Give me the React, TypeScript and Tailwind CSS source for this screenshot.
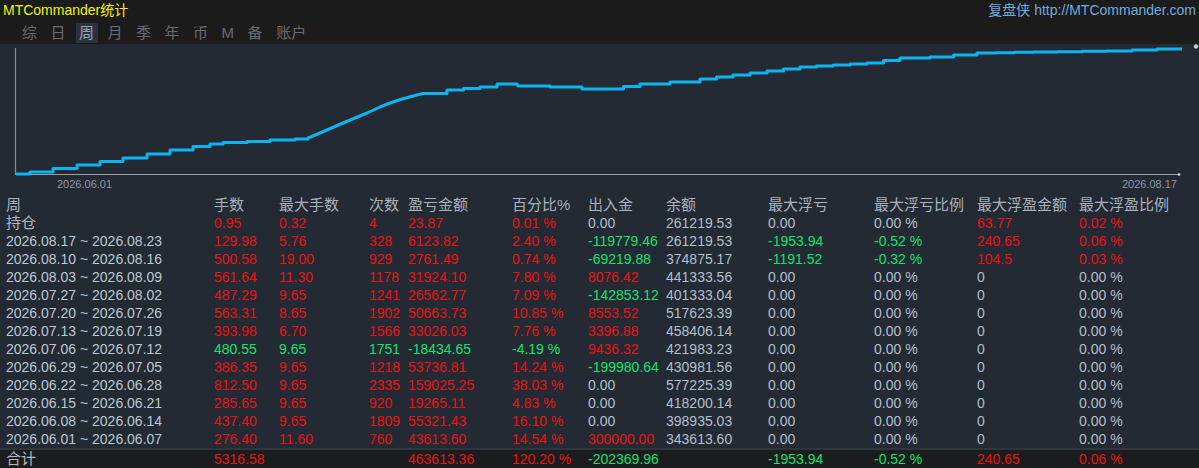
import React from "react";

// ========================================
// DATA
// ========================================

type Tone = "r" | "g" | "n";
type Cell = [string, Tone] | null;

const FONT = { fontFamily: '"Liberation Sans", "Noto Sans CJK SC", Arial, sans-serif' };

const TABS = ["综", "日", "周", "月", "季", "年", "币", "M", "备", "账户"];

const HEADERS = [
  "周",
  "手数",
  "最大手数",
  "次数",
  "盈亏金额",
  "百分比%",
  "出入金",
  "余额",
  "最大浮亏",
  "最大浮亏比例",
  "最大浮盈金额",
  "最大浮盈比例",
];

const zeroTail: Cell[] = [
  ["0.00", "n"],
  ["0.00 %", "n"],
  ["0", "n"],
  ["0.00 %", "n"],
];

const r = (v: string): Cell => [v, "r"];
const g = (v: string): Cell => [v, "g"];
const n = (v: string): Cell => [v, "n"];

const ROWS: { label: string; cells: Cell[] }[] = [
  {
    label: "持仓",
    cells: [r("0.95"), r("0.32"), r("4"), r("23.87"), r("0.01 %"), n("0.00"), n("261219.53"), n("0.00"), n("0.00 %"), r("63.77"), r("0.02 %")],
  },
  {
    label: "2026.08.17 ~ 2026.08.23",
    cells: [r("129.98"), r("5.76"), r("328"), r("6123.82"), r("2.40 %"), g("-119779.46"), n("261219.53"), g("-1953.94"), g("-0.52 %"), r("240.65"), r("0.06 %")],
  },
  {
    label: "2026.08.10 ~ 2026.08.16",
    cells: [r("500.58"), r("19.00"), r("929"), r("2761.49"), r("0.74 %"), g("-69219.88"), n("374875.17"), g("-1191.52"), g("-0.32 %"), r("104.5"), r("0.03 %")],
  },
  {
    label: "2026.08.03 ~ 2026.08.09",
    cells: [r("561.64"), r("11.30"), r("1178"), r("31924.10"), r("7.80 %"), r("8076.42"), n("441333.56"), ...zeroTail],
  },
  {
    label: "2026.07.27 ~ 2026.08.02",
    cells: [r("487.29"), r("9.65"), r("1241"), r("26562.77"), r("7.09 %"), g("-142853.12"), n("401333.04"), ...zeroTail],
  },
  {
    label: "2026.07.20 ~ 2026.07.26",
    cells: [r("563.31"), r("8.65"), r("1902"), r("50663.73"), r("10.85 %"), r("8553.52"), n("517623.39"), ...zeroTail],
  },
  {
    label: "2026.07.13 ~ 2026.07.19",
    cells: [r("393.98"), r("6.70"), r("1566"), r("33026.03"), r("7.76 %"), r("3396.88"), n("458406.14"), ...zeroTail],
  },
  {
    label: "2026.07.06 ~ 2026.07.12",
    cells: [g("480.55"), g("9.65"), g("1751"), g("-18434.65"), g("-4.19 %"), r("9436.32"), n("421983.23"), ...zeroTail],
  },
  {
    label: "2026.06.29 ~ 2026.07.05",
    cells: [r("386.35"), r("9.65"), r("1218"), r("53736.81"), r("14.24 %"), g("-199980.64"), n("430981.56"), ...zeroTail],
  },
  {
    label: "2026.06.22 ~ 2026.06.28",
    cells: [r("812.50"), r("9.65"), r("2335"), r("159025.25"), r("38.03 %"), n("0.00"), n("577225.39"), ...zeroTail],
  },
  {
    label: "2026.06.15 ~ 2026.06.21",
    cells: [r("285.65"), r("9.65"), r("920"), r("19265.11"), r("4.83 %"), n("0.00"), n("418200.14"), ...zeroTail],
  },
  {
    label: "2026.06.08 ~ 2026.06.14",
    cells: [r("437.40"), r("9.65"), r("1809"), r("55321.43"), r("16.10 %"), n("0.00"), n("398935.03"), ...zeroTail],
  },
  {
    label: "2026.06.01 ~ 2026.06.07",
    cells: [r("276.40"), r("11.60"), r("760"), r("43613.60"), r("14.54 %"), r("300000.00"), n("343613.60"), ...zeroTail],
  },
];

const TOTAL: Cell[] = [r("5316.58"), null, null, r("463613.36"), r("120.20 %"), g("-202369.96"), null, g("-1953.94"), g("-0.52 %"), r("240.65"), r("0.06 %")];

// key points of the equity curve (page coords)
const CURVE: [number, number][] = [
  [16, 174], [30, 172], [53, 168.5], [77, 165], [100, 161.5], [123, 158], [147, 154], [170, 150],
  [193, 146.5], [210, 144], [223, 142.5], [247, 141.5], [270, 140], [295, 139], [308, 138],
  [320, 133], [343, 123], [367, 113], [380, 107], [390, 103], [402, 99], [413, 96], [423, 93.5],
  [447, 90], [480, 87], [497, 84], [517, 84], [518, 86], [550, 86], [550, 87], [582, 87],
  [582, 89], [607, 89], [640, 84], [670, 82], [700, 79], [733, 75], [767, 71], [800, 67],
  [833, 65], [867, 63], [900, 58], [930, 57], [977, 53], [1033, 52], [1107, 51], [1157, 49],
  [1182, 49],
];

function stairPath(pts: [number, number][], top: number) {
  let d = `M${pts[0][0]} ${pts[0][1] - top}`;
  let py = pts[0][1];
  for (let i = 1; i < pts.length; i++) {
    const [x0, y0] = pts[i - 1];
    const [x1, y1] = pts[i];
    const dx = x1 - x0;
    const dy = y1 - y0;
    // steep parts are drawn straight, flat parts as small stairs
    if (dx === 0 || Math.abs(dy) / dx > 0.2) {
      d += ` L${x1} ${(y1 - top).toFixed(1)}`;
      py = y1;
      continue;
    }
    const steps = Math.max(1, Math.round(dx / 22));
    for (let s = 1; s <= steps; s++) {
      const x = x0 + (dx * s) / steps;
      const y = y0 + (dy * s) / steps;
      d += ` L${x.toFixed(1)} ${(py - top).toFixed(1)} L${x.toFixed(1)} ${(y - top).toFixed(1)}`;
      py = y;
    }
  }
  return d;
}

// ========================================
// COMPONENTS
// ========================================

function toneClass(t: Tone) {
  if (t === "r") return "text-[#e81414]";
  if (t === "g") return "text-[#14e070]";
  return "text-[#b4bfcc]";
}

const GRID =
  "grid grid-cols-[208px_65px_90px_39px_104px_76px_78px_102px_106px_103px_102px_1fr] pl-[6px]";

function Chart() {
  return (
    <div className="flex h-[152px] flex-col bg-[#232a33]">
      <svg width="1199" height="134" viewBox="0 0 1199 134" className="block">
        <line x1="15.5" y1="4" x2="15.5" y2="131" stroke="#878c93" strokeWidth="1.2" />
        <line x1="15" y1="130.5" x2="1180" y2="130.5" stroke="#9a9ea4" strokeWidth="1.2" />
        <circle cx="1179" cy="130.5" r="1.3" fill="#e4e4e4" />
        <path
          d={stairPath(CURVE, 44)}
          fill="none"
          stroke="#0cb4f0"
          strokeWidth="3"
          strokeLinejoin="round"
        />
        <circle cx="1196" cy="2.5" r="2.2" fill="#c8c8c8" />
      </svg>
      <div className="flex justify-between pl-[57px] pr-[22px] text-[11px] leading-[13px] text-[#8f98a4]">
        <span>2026.06.01</span>
        <span>2026.08.17</span>
      </div>
    </div>
  );
}

function Row({ label, cells }: { label: string; cells: Cell[] }) {
  const isCjk = /[\u4e00-\u9fff]/.test(label);
  return (
    <div className={`${GRID} h-[18px] items-center leading-[18px]`}>
      <div className={`${isCjk ? "text-[15px] text-[#b0b8c2]" : "text-[14px] text-[#bcc7d4]"} whitespace-nowrap`}>
        {label}
      </div>
      {cells.map((c, i) => (
        <div key={i} className={`whitespace-nowrap text-[14px] ${c ? toneClass(c[1]) : ""}`}>
          {c ? c[0] : ""}
        </div>
      ))}
    </div>
  );
}

export default function App() {
  return (
    <div className="h-[468px] w-[1199px] overflow-hidden bg-[#232a33]" style={FONT}>
      {/* Header */}
      <div className="h-[44px] bg-[#1b1b1c]">
        <div className="flex h-[20px] items-center justify-between pl-[3px] pr-[3px] text-[14px] leading-[18px]">
          <span className="text-[#f2f200]">MTCommander统计</span>
          <span className="text-[#72aadc]">复盘侠 http://MTCommander.com</span>
        </div>
        <div className="ml-[18.5px] mt-[3px] flex h-[20px] gap-[6.5px]">
          {TABS.map((t) => (
            <div
              key={t}
              className={`flex h-[20px] items-center px-[3.5px] text-[15px] leading-[20px] ${
                t === "周" ? "bg-[#2a323d] text-[#98a6b6]" : "text-[#686c72]"
              }`}
            >
              {t}
            </div>
          ))}
        </div>
      </div>

      <Chart />

      {/* Table */}
      <div>
        <div className={`${GRID} h-[18px] items-center text-[15px] leading-[18px] text-[#a9b1bc]`}>
          {HEADERS.map((h) => (
            <div key={h} className="whitespace-nowrap">
              {h}
            </div>
          ))}
        </div>
        {ROWS.map((row) => (
          <Row key={row.label} label={row.label} cells={row.cells} />
        ))}
        <div className="h-[20px] border-t-2 border-[#30353b] bg-[#1b1c1e]">
          <Row label="合计" cells={TOTAL} />
        </div>
      </div>
    </div>
  );
}
